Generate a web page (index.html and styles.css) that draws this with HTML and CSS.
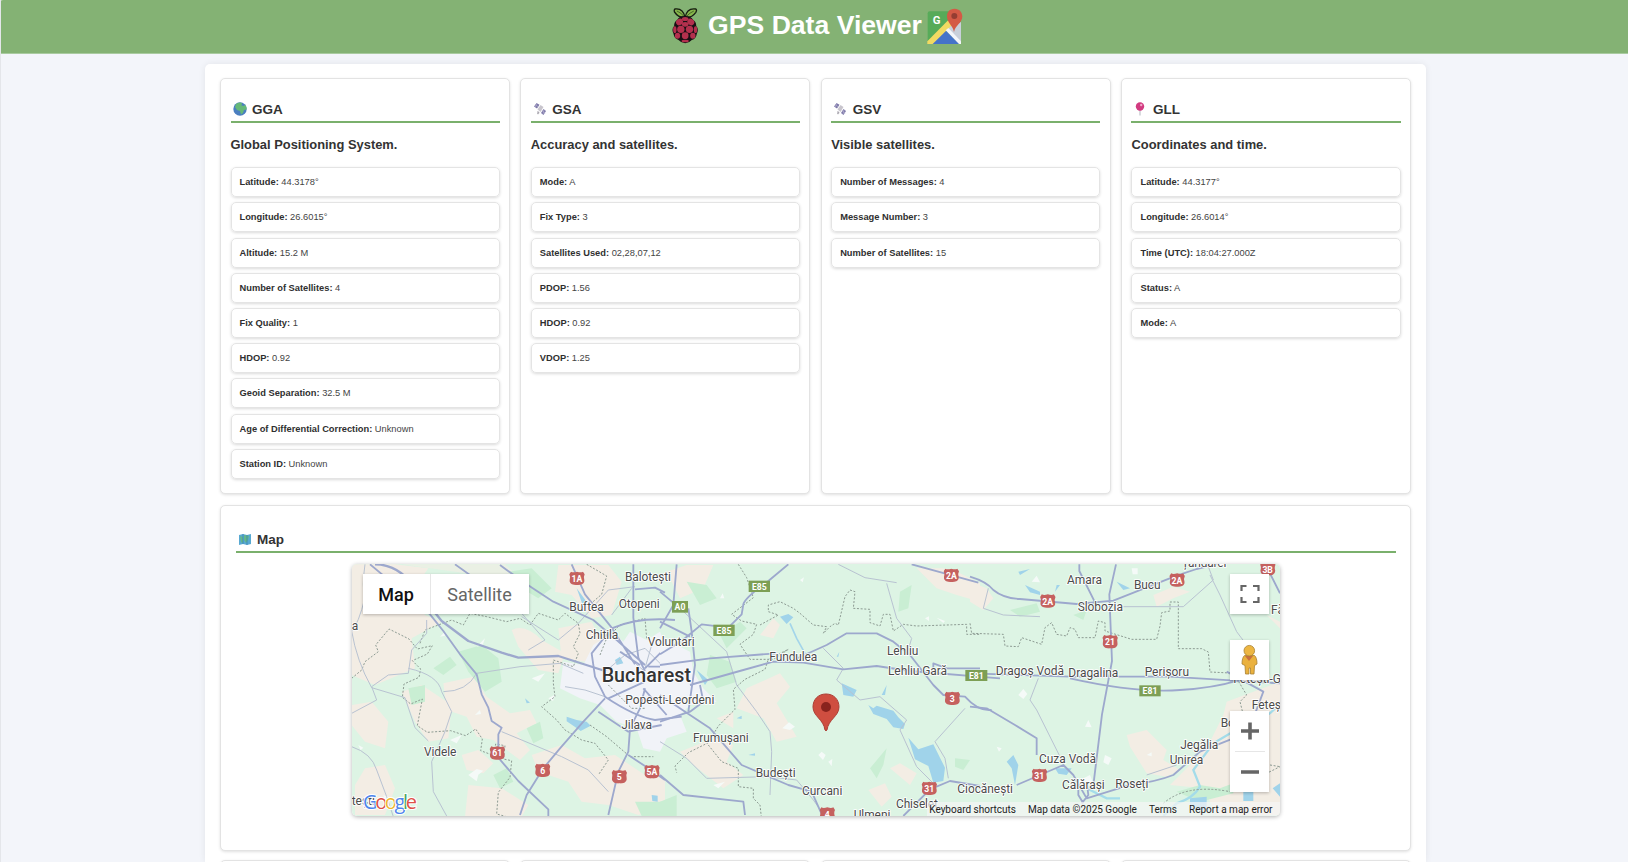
FILE: index.html
```html
<!DOCTYPE html>
<html lang="en">
<head>
<meta charset="utf-8">
<title>GPS Data Viewer</title>
<link rel="stylesheet" href="styles.css">
</head>
<body>
<svg class="defs" width="0" height="0">
  <symbol id="sat" viewBox="0 0 14 14">
    <path d="M1 4.500L3.500 1l3 1.800L4 6.500zM8 11l2.500-4L13 9l-2.500 4z" fill="#7d78a8"/>
    <path d="M4.500 7.500L7.500 3l3 2-3 5z" fill="#c8c5cd"/>
    <path d="M2.300 2.800l3 2M3.500 1.500L2.500 5M9.200 9l3 2M11 8l-1 4" stroke="#b9b4d4" stroke-width=".6"/>
    <path d="M4.500 9.500l1.500 1.800M4.500 12l1.500-2" stroke="#aaa7b0" stroke-width="1.300"/>
  </symbol>
  <symbol id="shield" viewBox="0 0 48 42">
    <path d="M6 1q6 4 18 0 12 4 18 0l5 8q-4 7-1 17 1 9-7 13-8 3-15 2-7 1-15-2-8-4-7-13 3-10-1-17z" fill="#c5615f"/>
  </symbol>
</svg>
<header class="top">
  <svg class="berry" viewBox="0 0 80 108">
    <path d="M39 28Q20 31 7 12 5 6 8 3q24-4 31 25Q44-1 71 3q4 3 0 10-13 18-32 15z" fill="#86b64b" stroke="#171d12" stroke-width="4"/>
    <path d="M14 9q12 4 22 17M65 9Q53 14 42 26" fill="none" stroke="#28391a" stroke-width="2"/>
    <path d="M39 24q17-1 24 12 10 6 9 18 9 9 2 23-2 15-15 19-9 10-20 10T19 96Q6 91 4 77-3 63 6 54 5 42 15 36q7-13 24-12z" fill="#191014"/>
    <g fill="#b3304d"><ellipse cx="39" cy="33" rx="10" ry="6"/><ellipse cx="22" cy="42" rx="11" ry="9" transform="rotate(-35 22 42)"/><ellipse cx="56" cy="42" rx="11" ry="9" transform="rotate(35 56 42)"/><ellipse cx="39" cy="49" rx="10" ry="7"/><circle cx="26" cy="64" r="11"/><circle cx="52" cy="64" r="11"/><ellipse cx="8" cy="65" rx="5" ry="10"/><ellipse cx="70" cy="65" rx="5" ry="10"/><circle cx="39" cy="83" r="10"/><ellipse cx="16" cy="83" rx="8" ry="9"/><ellipse cx="62" cy="83" rx="8" ry="9"/><ellipse cx="39" cy="99" rx="11" ry="4"/></g>
  </svg>
  <h1>GPS Data Viewer</h1>
  <svg class="gmap" viewBox="0 0 108 108">
    <rect x="2" y="10" width="98" height="98" rx="6" fill="#57ab59"/>
    <path d="M102 42V106L56 58z" fill="#c9d0db"/><path d="M4 108L52 63l46 45z" fill="#4573c9"/>
    <path d="M1 100L70 30l12 14L17 108H1z" fill="#f2da62"/><path d="M56 67L96 108h6V100L64 60z" fill="#f3f5fa"/>
    <text x="17" y="48" class="gletter">G</text>
    <path d="M83 2C67 2 60 13 60 25c0 19 17 27 21 47 4-20 25-27 25-47C106 13 97 2 83 2z" fill="#d45a45"/><circle cx="82" cy="24" r="9" fill="#953d32"/>
  </svg>
</header>
<main class="box">
  <section class="cards">
    <article class="card">
      <h3><svg class="ico" viewBox="0 0 14 14"><circle cx="7" cy="7" r="6.700" fill="#4b7fc0"/><path d="M3 2Q6-.5 9 1L8.500 3.500 11 4l1-1.500q2 2.500 1.500 5L11 8l-1 3-2 1.500L7 9 4 8 2 5z" fill="#66b978"/></svg>GGA</h3>
      <h4>Global Positioning System.</h4>
      <ul><li><b>Latitude:</b> 44.3178°</li><li><b>Longitude:</b> 26.6015°</li><li><b>Altitude:</b> 15.2 M</li><li><b>Number of Satellites:</b> 4</li><li><b>Fix Quality:</b> 1</li><li><b>HDOP:</b> 0.92</li><li><b>Geoid Separation:</b> 32.5 M</li><li><b>Age of Differential Correction:</b> Unknown</li><li><b>Station ID:</b> Unknown</li></ul>
    </article>
    <article class="card">
      <h3><svg class="ico"><use href="#sat"/></svg>GSA</h3>
      <h4>Accuracy and satellites.</h4>
      <ul><li><b>Mode:</b> A</li><li><b>Fix Type:</b> 3</li><li><b>Satellites Used:</b> 02,28,07,12</li><li><b>PDOP:</b> 1.56</li><li><b>HDOP:</b> 0.92</li><li><b>VDOP:</b> 1.25</li></ul>
    </article>
    <article class="card">
      <h3><svg class="ico"><use href="#sat"/></svg>GSV</h3>
      <h4>Visible satellites.</h4>
      <ul><li><b>Number of Messages:</b> 4</li><li><b>Message Number:</b> 3</li><li><b>Number of Satellites:</b> 15</li></ul>
    </article>
    <article class="card">
      <h3><svg class="ico" viewBox="0 0 14 14"><path d="M7 7v6.500" stroke="#b9bcc4" stroke-width="1.100"/><circle cx="7" cy="4.500" r="4.200" fill="#d23b80"/><circle cx="8.200" cy="3" r="1.200" fill="#f2a5c8"/></svg>GLL</h3>
      <h4>Coordinates and time.</h4>
      <ul><li><b>Latitude:</b> 44.3177°</li><li><b>Longitude:</b> 26.6014°</li><li><b>Time (UTC):</b> 18:04:27.000Z</li><li><b>Status:</b> A</li><li><b>Mode:</b> A</li></ul>
    </article>
  </section>
  <section class="card mapcard">
    <h3><svg class="ico" viewBox="0 0 14 14"><path d="M1 3l4-1 4 1 4-1v10l-4 1-4-1-4 1z" fill="#58a9d2"/><path d="M2 4l3 1v6l-2-1zM6 3l5 1-1 4-2 3-2-3z" fill="#63b78b"/><path d="M5 2v10M9 3v10" stroke="#377faf" stroke-width=".7"/></svg>Map</h3>
    <div class="map">
      <svg class="canvas" viewBox="352 564 928 252">
        <rect x="352" y="564" width="928" height="252" fill="#ddf4e4"/>
        <!-- farmland, forest and water -->
        <g transform="translate(345 555) scale(.33333)">
          <g class="land">
            <path d="M20 28H150L250 40 200 110 240 180 290 200 200 250 210 340 90 390 20 360z"/>
            <path d="M170 28H480L560 100 540 150 500 120 400 60z" opacity=".6"/>
            <path d="M500 225q40-20 90 30l70 40-20 60-60-10-60-70zM295 385l90-20 40 60 70 50 60-10 20 40-60 30 40 50-30 30-80-60-50-10-30-60-60-20z"/>
            <path d="M640 30h150l40 50-30 100-60 10-60-70-50-10zM640 220l100-20 30 60-50 60-70-10zM560 600l90-30 70 40 90-10 90 60 60 10v90l-80 20-90-30-80-10-40-60-90-30zM350 600l50-15 45 40-30 30-50-10zM60 640l60-10 30 70-30 80H30v-90zM170 410l60-20 90 60-10 100-60 10-40-60zM370 690l100 10 80 50-20 35H360zM20 450l60-10 50 60-10 80-60-20-40-50z"/>
          </g>
          <g class="forest"><path d="M340 290l70-20 50 40 10 70-50 30-50-60zM190 400l50-10v50l-40 10zM265 340l50-35 20 25-40 30zM490 50l70-10 60 60-40 30-50-30zM870 740h100v43h-80zM545 520l40-20 10 50-30 15zM445 660l40-20 20 40-40 20z"/></g>
          <path class="city" d="M655 320l60 10 30-60 60-40 30 30 20-30 50 25 40-25 20 50 50 20-20 50 60 30 60 60-80 10-30 30 20 50-60 20-20 40-50-10-20-60-60-20-50-50-60-20-60-30z"/>
          <g class="water"><path d="M665 485l30 10 30 5 12 12-30 16-20-14-22-15zM810 315l15-10 10 20-20 5zM540 430l15 13-10 2zM920 720l18 2v18l-16-2zM695 100l30 40-12 10z"/></g>
          <g class="patch"><path d="M285 245l15-15v12zM395 275l25-25-7 20zM315 555l35-15-15 25zM370 660l25-18 20 5-15 12-5 20zM560 370l40-15-20 25zM610 430l22-12-8 20zM40 570l15 8-8 8zM115 720l25 10-20 8zM390 480l15-15 3 12z"/></g>
          <g class="border"><path d="M20 370l30-25 10-25 40-30-8-20 40-48 60 30 25 30 45-10-15 25-45 20 25 25-5 25-45 20-5 40 25 20 35-15-15 80 30 20 70-5 45 15 30-20 20 30-5 35 40 15 5-35 28 5-5 40 25 5-5 50-35 45-5 65 55 15-10 15"/><path d="M225 265l15-40 80-30 35 15 20-35 50 10 60 15 40-10 30 20 25-35 60 20 20-20 40 30 5 30-20 40 15 20-15 40-60-20v70l5 40-40 30 45 40 25 30 50 30 40 10 40 50-30 45"/><path d="M725 28l60 35-15 55-35 30M765 300l20-50 40-40 75-20 5 60M790 390l70 70 40 0M735 510l50 35 70 60 70 0"/></g>
          <g class="minor"><path d="M60 28q-10 70 0 100-20 80-40 100 15 90 60 170l100 30 30 90 40 40M20 475l75-40-15-40 50-35 60-5 10-70 45-50v-40M190 340q90 20 100 70l30 60-20 60-40 90 5 90 40 73M295 410q70 0 100-55l130-20 120-10 70 30M470 530l180 75 80 40 60 65M20 575q60 20 75 70l30 80 20 60M530 185l110 70 60-50 90-100 80-10M660 395l60 10 60 20M530 175l70 80-50 30M860 100l-60 80M780 350l60-50 60-20 60 60M830 290l70 60M920 270l-20 70"/></g>
          <g class="major"><path d="M75 28l180 150 40 50 50 70 50 60 15 60 20 40 10 40 30 20-10 20v70l60 70 90 85v40"/><path d="M90 28q70 0 120 70l80 100 80 60 100 35 50 15 120-5 140 45" style="stroke-width:7"/><path d="M330 28l70 50M465 30q80 60 160 110l120 55 70 60 85 75M680 28l40 90 80 100 70 110M865 28v160l15 120 20 40M870 103l60-5 30 15M900 340l90-90M885 330l-60-40M910 335h70M900 400l-15 60-30 60-5 70-30 60-30 130M790 430l110-50M780 430l-65 70-70 80-50 60-50 80-20 60M850 600l60 40 50 35M895 400l70 80"/><path d="M990 195q-110-10-190 25l-60 75 10 70 30 60q90 60 150 70l80-10M760 470l90 60 100-20"/></g>
        </g>
        <g transform="translate(660 555) scale(.33333)">
          <g class="land"><path d="M20 50l60-20h80l-30 70-70 30zM300 240l40-50 20 20-20 40zM260 400l100-45 30 40-40 50 60 100-60 15-40-70-80-30zM60 590l100-40 60 20-20 50 50 40-60 40-90-70zM170 490l50-20v50zM625 705l50-20 20 40-30 30zM690 640l30-15 50 30-20 35zM770 40l60 60 60 20 70 20V85l-60-30-50-15z"/></g>
          <g class="forest"><path d="M80 80l60 10 30 40-50 20zM150 300l60 20 20 60-60 20-30-40zM180 240l60-40 20 20-60 60zM720 110l35-20-10 70-30 10zM630 640l50-60-10 50-20 40zM885 610l45 5-20 30-25-10zM0 740l50-20v65H0z"/></g>
          <path class="city" d="M0 240l30 20 60 30 10 60 30 50-50 20-80 10z"/>
          <g class="water"><path d="M360 185l25-8 15 10-20 20zM545 385l45 20-10 20-30-5zM625 450l15 10 10-8 50 15 15 20 20 20-5 15-30-5-20-25-40-15zM745 548l30 35 45-15 20 40 15 30-5 40-30 5-15-50-40-20zM110 345l35 30-10 15zM265 600l20-5v7zM665 420l15-30-5 30zM230 490l15-8v10zM530 305l8-15-3 15z"/><path d="M390 205l20 45 25 45" style="fill:none;stroke:#a4d5ea;stroke-width:5"/></g>
          <g class="patch"><path d="M367 520l20-18 18 13-15 10zM475 600l10-10 12 10-8 15zM505 620l12-8-2 22zM830 188l25 10-5 6zM795 190l12-6v14zM180 130l8-15 5 15zM420 75l12-8-4 15zM160 690l35-10-20 20z"/></g>
          <g class="border"><path d="M235 28l25 40 20 60-65 50 30 20 45 10-10 30-40 30 30 45 70 0 45-30-60 30-10 30-60 30-35 30 5 60-50 50-30 50-60 30-40 40 5 20"/><path d="M300 210l55-30-30-10v-20l35-10 20 10 20 10 20 15 40 35 40 5-10 20 20-20 15-10 10 5 20-85 15-20 15 5-5 50 50 3v40l30 10 10-35 20 0 10 50 30-20 40 5 150-5v30l40 0M145 570l40 50 50 20v55l45 5 0 30 20 20 5 45"/></g>
          <g class="minor"><path d="M60 160l140 130 30 100 60 80 40 60 5 60-5 130M535 28l80 40 95 15M680 85l30 105 45 60-15 50M490 280l60 60-20 35 70 60 60-10 80 70-20 30 50 110 50 50M915 460l-90 100 30 50 10 60M0 560l80 50 60 60 180-5 90 10 50 60 30 42"/></g>
          <g class="major"><path d="M385 28l-60 50q-70 50-75 70l-5 30-40 40-80-10-60 50-65 40M50 28L40 150l-40 70M85 160l10 70 10 100-20 140M0 330l150-20 200-15M90 390l160-45 90-25 90 3 120 20 100-10 100 15 270 22M400 315l100-45 60-35h90l50 25 50 40 70 90 30 30 65 5q40 45 80 40M820 340l0-15 40 15 100 0M0 110l60 50M0 200l90 45M0 500l90-30 40-30-10-50M0 420l90 60 60 40 95 110 140 60 70 20 40 90M755 28l200 55M0 660l70 60 180 20 5 40M730 783l80-80 60-25 90 15"/></g>
        </g>
        <g transform="translate(970 555) scale(.33333)">
          <g class="land"><path d="M0 80l50 20 20 30-30 35-40-25zM550 120l60-25 50 15-50 20-50 25zM470 540l60-15 60 60-10 30 50 30-40 20-60-10-50-80zM770 440l160-60v400H740l-40-80-100-10 60-60 60-70 40-80zM890 180l40 20v20z"/></g>
          <g class="forest"><path d="M120 165l80-20 10 25-60 15zM310 180l40-15-10 30zM620 710l70-20 60 10 40-15v30l-100 25z"/></g>
          <g class="water"><path d="M145 50l35-8-30 18zM165 90l45 20v10l-30-8zM110 620l20-20 15 30-10 60-10-50zM255 640l50 0-15 20-25-4zM440 80l40 20-20 5zM820 700h30v38h-30zM660 730l50-5v40h-50zM270 90l-15 20 5-20zM908 700l22-15v40z"/><path d="M930 440q-30 50-90 60l-110 65-60 80 20 50q-20 35-70 50l-40 38M350 700l60 30 40 0" style="fill:none;stroke:#a4dcea;stroke-width:7"/></g>
          <g class="patch"><path d="M185 80l15-18 10 20zM485 40h18v18h-15zM145 420l15-18 12 15-12 15zM345 515l10-20 10 22zM405 600l20 10-10 20-15-8zM320 680l40-20 10 25zM80 575l15 5-8 10zM530 600l15-8v12z"/></g>
          <g class="border"><path d="M0 205l5 30 95 3 5 35 40 2 10-27 60 20 10-50 20-15 15 35 30 5 10-25 15 5 10 25 50 0 10-50 20 5v25l80 25 75 0 10-40 5-40 25-5v-27h25v140l70 0 20 10 5 60 100 5"/><path d="M800 370l30 50-20 20 10 40M580 745q70-60 200-35l150-75M900 630l30 5"/></g>
          <g class="minor"><path d="M55 100l-15 60 60 20 110 5M460 155l180 0 90-80-15-40M720 60l30 60 50 110 60 80M205 370l-25 65 20 30 70 140M530 660l90-30"/></g>
          <g class="major"><path d="M0 65q50 15 70 40 30 25 80 27l170 15 110-10 190-75 60-20 60-15M328 28v20l50 100M438 28l-20 90 8 200-30 160-25 205M0 355l300 10 300 0 330 20M300 370q200 45 330 35 100-5 180-30M0 455l50 5 85 50 65 40v50M140 690l70-30 70-30 30 30 40 70 130-40q80-10 130-30l80-70 100-40 60-60 30-80-110-60M900 55l30 60M350 680l5 40-20 25M325 680v40l15 25"/></g>
        </g>
        <!-- place names -->
        <g class="label" transform="translate(345 555) scale(.33333)">
          <text x="840" y="77" textLength="138">Balotești</text><text x="673" y="168" textLength="103">Buftea</text><text x="821" y="160" textLength="123">Otopeni</text><text x="722" y="251" textLength="98">Chitila</text><text x="908" y="273" textLength="141">Voluntari</text><text x="770" y="382" textLength="268" class="big">Bucharest</text><text x="841" y="446" textLength="267">Popesti-Leordeni</text><text x="829" y="521" textLength="92">Jilava</text><text x="237" y="604" textLength="97">Videle</text><text x="20" y="224">a</text><text x="20" y="749">tești</text>
        </g>
        <g class="label" transform="translate(660 555) scale(.33333)">
          <text x="328" y="317" textLength="144">Fundulea</text><text x="681" y="299" textLength="94">Lehliu</text><text x="684" y="359" textLength="177">Lehliu Gară</text><text x="99" y="562" textLength="167">Frumușani</text><text x="287" y="665" textLength="120">Budești</text><text x="426" y="720" textLength="121">Curcani</text><text x="708" y="759" textLength="126">Chiselet</text><text x="581" y="792" textLength="110">Ulmeni</text><text x="892" y="714" textLength="167">Ciocănești</text>
        </g>
        <g class="label" transform="translate(970 555) scale(.33333)">
          <text x="291" y="86" textLength="105">Amara</text><text x="492" y="102" textLength="80">Bucu</text><text x="635" y="37" textLength="134">Țăndărei</text><text x="323" y="168" textLength="136">Slobozia</text><text x="77" y="359" textLength="205">Dragoș Vodă</text><text x="295" y="366" textLength="150">Dragalina</text><text x="524" y="363" textLength="133">Perișoru</text><text x="790" y="383">Fetești-Gară</text><text x="845" y="461">Fetești</text><text x="752" y="517">Borcea</text><text x="631" y="581" textLength="114">Jegălia</text><text x="599" y="628" textLength="101">Unirea</text><text x="207" y="623" textLength="171">Cuza Vodă</text><text x="276" y="703" textLength="128">Călărași</text><text x="436" y="700" textLength="99">Roseți</text><text x="903" y="177">Făcăeni</text>
        </g>
        <!-- road numbers -->
        <g class="num" transform="translate(345 555) scale(.33333)">
          <use href="#shield" x="672" y="49" width="48" height="42"/><text x="696" y="81">1A</text><use href="#shield" x="433" y="573" width="48" height="42"/><text x="457" y="604">61</text><use href="#shield" x="569" y="625" width="48" height="42"/><text x="593" y="656">6</text><use href="#shield" x="799" y="644" width="48" height="42"/><text x="823" y="675">5</text><use href="#shield" x="896" y="629" width="50" height="42"/><text x="921" y="660">5A</text>
        </g>
        <g class="num" transform="translate(660 555) scale(.33333)">
          <rect x="266" y="77" width="64" height="34"/><text x="298" y="105">E85</text><rect x="160" y="209" width="64" height="34"/><text x="192" y="237">E85</text><rect x="36" y="138" width="48" height="35"/><text x="60" y="166">A0</text>
          <use href="#shield" x="850" y="40" width="48" height="42"/><text x="874" y="72">2A</text><use href="#shield" x="853" y="409" width="48" height="42"/><text x="877" y="440">3</text><use href="#shield" x="784" y="679" width="48" height="42"/><text x="808" y="711">31</text><use href="#shield" x="478" y="756" width="48" height="42"/><text x="502" y="788">4</text>
        </g>
        <g class="num" transform="translate(970 555) scale(.33333)">
          <rect x="-14" y="345" width="66" height="33"/><text x="19" y="372">E81</text><rect x="508" y="391" width="64" height="33"/><text x="540" y="418">E81</text>
          <use href="#shield" x="209" y="117" width="49" height="42"/><text x="233" y="149">2A</text><use href="#shield" x="597" y="54" width="49" height="42"/><text x="621" y="86">2A</text><use href="#shield" x="396" y="239" width="49" height="42"/><text x="420" y="271">21</text><use href="#shield" x="184" y="640" width="49" height="42"/><text x="208" y="671">31</text><use href="#shield" x="869" y="20" width="49" height="42"/><text x="893" y="54">3B</text>
        </g>
        <g transform="translate(660 555) scale(.33333)"><path d="M498 417c-24 0-39 17-39 39 0 28 32 37 36 69q3 5 6 0c4-32 36-41 36-69 0-22-15-39-39-39z" fill="#cf4e40" stroke="#ab3e35" stroke-width="3"/><circle cx="498" cy="456" r="15" fill="#89231d"/></g>
        <text class="logo" x="363" y="808.500" textLength="54"><tspan fill="#4f86ec">G</tspan><tspan fill="#df5148">o</tspan><tspan fill="#eeb72e">o</tspan><tspan fill="#4f86ec">g</tspan><tspan fill="#48a45c">l</tspan><tspan fill="#df5148">e</tspan></text>
      </svg>
      <div class="types"><span class="on">Map</span><span>Satellite</span></div>
      <svg class="ctl full" viewBox="0 0 39 40"><path d="M11.500 17v-5h5M23 12h5.500v5M28.500 23v5H23M16.500 28h-5v-5" fill="none" stroke="#666" stroke-width="2.200"/></svg>
      <svg class="ctl peg" viewBox="0 0 39 40"><path d="M14.500 15.500h10q2.500 2 2.500 8.500l-2.500 1.500-.5 8.500h-3.500v-6h-1.500v6h-3.500L15 25.500 12 24q0-6.500 2.500-8.500z" fill="#eab13e" stroke="#a88031" stroke-width=".8"/><path d="M15 16h8l-4 5z" fill="#c8703f"/><circle cx="19.300" cy="10.700" r="5.300" fill="#edb642" stroke="#a88031" stroke-width=".8"/></svg>
      <svg class="ctl zoomer" viewBox="0 0 39 81"><path d="M11 20h18M20 11.500v17M11 61h18" stroke="#666" stroke-width="3.600"/><path d="M5 40.500h30" stroke="#e6e6e6"/></svg>
      <div class="legal"><span>Keyboard shortcuts</span><span>Map data ©2025 Google</span><span>Terms</span><span>Report a map error</span></div>
    </div>
  </section>
  <section class="cards next"><article class="card"></article><article class="card"></article><article class="card"></article><article class="card"></article></section>
</main>
</body>
</html>
```
FILE: styles.css
```css
* { box-sizing: border-box; }
html { background: #f4f6fb; }
body { margin: 0; height: 862px; overflow: hidden; font-family: "Liberation Sans", Arial, sans-serif; color: #333; background: #f3f5fa; border-left: 1px solid #e4e6ea; }
.defs { position: absolute; }
.top { height: 54px; margin-left: -1px; background: #84b274; border-bottom: 1px solid #a9cba0; border-top-left-radius: 3px; display: flex; justify-content: center; align-items: flex-start; padding: 8px 0 0 7px; }
.top h1 { margin: 0 5px 0 9px; font-size: 26.600px; line-height: 34px; color: #fff; white-space: nowrap; }
.berry { width: 27px; height: 36px; }
.gmap { width: 36px; height: 36px; }
.gletter { font: bold 34px Roboto, sans-serif; fill: #fff; }
.box { width: 1221px; height: 798px; overflow: hidden; margin: 10px 0 0 204px; padding: 14px 15px 0; background: #fff; border-radius: 5px 5px 0 0; box-shadow: 0 0 7px rgba(0,0,0,.07); }
.cards { display: grid; grid-template-columns: repeat(4, 1fr); gap: 10.300px; }
.card { background: #fff; border: 1px solid #e3e3e3; border-radius: 5px; box-shadow: 0 1px 3px rgba(0,0,0,.12); padding: 19px 9.500px 15px; }
.cards .card { height: 416px; }
h3 { margin: 0; height: 25px; border-bottom: 2px solid #7ab06c; display: flex; align-items: center; font-size: 13.500px; line-height: 21px; padding-bottom: 1px; }
.ico { width: 14px; height: 14px; margin: 0 5.500px 0 2px; }
h4 { margin: 14px 0 0; font-size: 12.900px; line-height: 16px; }
ul { list-style: none; margin: 14.300px 0 0; padding: 0; display: grid; gap: 5.200px; }
li { height: 30px; border: 1px solid #e4e4e4; border-radius: 5px; box-shadow: 0 1px 3px rgba(0,0,0,.15); padding: 0 8px; font-size: 9.300px; line-height: 28px; color: #444; white-space: nowrap; }
li b { color: #2f2f2f; }
.mapcard { margin-top: 10.500px; height: 346px; padding: 22.500px 14.500px 0; }
.map { position: relative; width: 928px; height: 252px; margin: 11px auto 0; border-radius: 5px; overflow: hidden; box-shadow: 0 1px 4px rgba(0,0,0,.3); font-family: Roboto, sans-serif; }
.canvas { display: block; width: 928px; height: 252px; }
.land { fill: #f3ede4; }
.forest { fill: #c9eed3; }
.city { fill: #f1f3f8; }
.water { fill: #a0d3ea; }
.patch { fill: #f5faf8; }
.border { fill: none; stroke: #8c9a92; stroke-width: 3; stroke-dasharray: 6 5; }
.minor { fill: none; stroke: #b8c2d1; stroke-width: 3; }
.major { fill: none; stroke: #9da8cd; stroke-width: 5.500; stroke-linejoin: round; }
.label { font: 36px Roboto, sans-serif; fill: #4b4b4b; stroke: #fff; stroke-width: 5px; paint-order: stroke; }
.label .big { font-size: 59px; font-weight: 500; fill: #333; }
.num { font: bold 26px Roboto, sans-serif; text-anchor: middle; }
.num text { fill: #fff; }
.num rect { fill: #7d9f55; }
.logo { font: 20px "Open Sans", sans-serif; stroke: #fff; stroke-width: 2px; paint-order: stroke; }
.types { position: absolute; left: 11px; top: 10px; height: 40px; display: flex; background: #fff; box-shadow: 0 1px 3px rgba(0,0,0,.25); font-size: 18px; line-height: 41px; color: #666; }
.types span { width: 98px; text-align: center; }
.types .on { width: 68px; color: #111; font-weight: 500; border-right: 1px solid #e6e6e6; }
.ctl { position: absolute; right: 11px; width: 39px; background: #fff; box-shadow: 0 1px 3px rgba(0,0,0,.25); }
.full { top: 10px; height: 40px; }
.peg { top: 76px; height: 40px; }
.zoomer { top: 147px; height: 81px; }
.legal { position: absolute; right: 0; bottom: 0; height: 14px; display: flex; gap: 12px; padding: 0 7px 0 2px; background: rgba(245,245,245,.7); font-size: 10px; line-height: 15px; color: #222; white-space: nowrap; }
.next { margin-top: 9.500px; }
```
